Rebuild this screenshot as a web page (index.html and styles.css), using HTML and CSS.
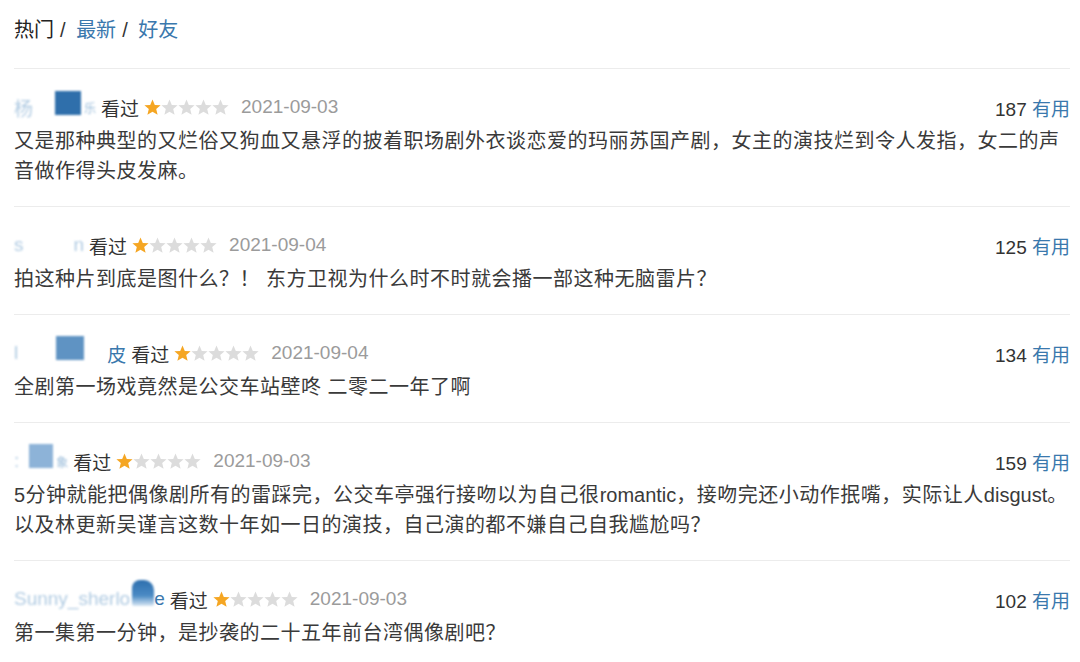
FILE: index.html
```html
<!DOCTYPE html>
<html lang="zh">
<head>
    <meta charset="UTF-8">
    <title>短评</title>
    <link rel="stylesheet" href="styles.css">
</head>
<body>
    <svg width="0" height="0" class="defs">
        <defs>
            <polygon id="star" points="8.5,0.5 10.8,5.9 16.6,6.3 12.2,10.1 13.6,15.8 8.5,12.7 3.4,15.8 4.8,10.1 0.4,6.3 6.2,5.9"/>
        </defs>
    </svg>

    <div class="tabs">
        <span class="tab">热门</span><span class="slash">/</span>
        <a class="tab link">最新</a><span class="slash">/</span>
        <a class="tab link">好友</a>
    </div>

    <div class="comment">
        <div class="meta">
            <div class="info">
                <span class="user"><span class="faint">杨</span><span class="mosaic m1"></span><span class="faint tail">乐</span></span>
                <span class="watched">看过</span>
                <svg class="stars" width="86" height="17" viewBox="0 0 86 17">
                    <use href="#star" x="0" class="on"/><use href="#star" x="17" class="off"/><use href="#star" x="34" class="off"/><use href="#star" x="51" class="off"/><use href="#star" x="68" class="off"/>
                </svg>
                <span class="date">2021-09-03</span>
            </div>
            <div class="votes"><span class="count">187</span> <a class="useful">有用</a></div>
        </div>
        <p class="text">又是那种典型的又烂俗又狗血又悬浮的披着职场剧外衣谈恋爱的玛丽苏国产剧，女主的演技烂到令人发指，女二的声音做作得头皮发麻。</p>
    </div>

    <div class="comment">
        <div class="meta">
            <div class="info">
                <span class="user"><span class="faint">s</span><span class="gap g2"></span><span class="faint">n</span></span>
                <span class="watched">看过</span>
                <svg class="stars" width="86" height="17" viewBox="0 0 86 17">
                    <use href="#star" x="0" class="on"/><use href="#star" x="17" class="off"/><use href="#star" x="34" class="off"/><use href="#star" x="51" class="off"/><use href="#star" x="68" class="off"/>
                </svg>
                <span class="date">2021-09-04</span>
            </div>
            <div class="votes"><span class="count">125</span> <a class="useful">有用</a></div>
        </div>
        <p class="text">拍这种片到底是图什么？！ 东方卫视为什么时不时就会播一部这种无脑雷片？</p>
    </div>

    <div class="comment">
        <div class="meta">
            <div class="info">
                <span class="user"><span class="faint">l</span><span class="gap g3"></span><span class="mosaic m3"></span><span class="gap g3b"></span><span class="plain">皮</span></span>
                <span class="watched">看过</span>
                <svg class="stars" width="86" height="17" viewBox="0 0 86 17">
                    <use href="#star" x="0" class="on"/><use href="#star" x="17" class="off"/><use href="#star" x="34" class="off"/><use href="#star" x="51" class="off"/><use href="#star" x="68" class="off"/>
                </svg>
                <span class="date">2021-09-04</span>
            </div>
            <div class="votes"><span class="count">134</span> <a class="useful">有用</a></div>
        </div>
        <p class="text">全剧第一场戏竟然是公交车站壁咚 二零二一年了啊</p>
    </div>

    <div class="comment">
        <div class="meta">
            <div class="info">
                <span class="user"><span class="faint">:</span><span class="mosaic m4"></span><span class="faint tail">象</span></span>
                <span class="watched">看过</span>
                <svg class="stars" width="86" height="17" viewBox="0 0 86 17">
                    <use href="#star" x="0" class="on"/><use href="#star" x="17" class="off"/><use href="#star" x="34" class="off"/><use href="#star" x="51" class="off"/><use href="#star" x="68" class="off"/>
                </svg>
                <span class="date">2021-09-03</span>
            </div>
            <div class="votes"><span class="count">159</span> <a class="useful">有用</a></div>
        </div>
        <p class="text">5分钟就能把偶像剧所有的雷踩完，公交车亭强行接吻以为自己很<span class="en">romantic</span>，接吻完还小动作抿嘴，实际让人<span class="en">disgust</span>。以及林更新吴谨言这数十年如一日的演技，自己演的都不嫌自己自我尴尬吗？</p>
    </div>

    <div class="comment">
        <div class="meta">
            <div class="info">
                <span class="user"><span class="faint">Sunny_sherlo</span><span class="mosaic m5"></span><span class="plain">e</span></span>
                <span class="watched">看过</span>
                <svg class="stars" width="86" height="17" viewBox="0 0 86 17">
                    <use href="#star" x="0" class="on"/><use href="#star" x="17" class="off"/><use href="#star" x="34" class="off"/><use href="#star" x="51" class="off"/><use href="#star" x="68" class="off"/>
                </svg>
                <span class="date">2021-09-03</span>
            </div>
            <div class="votes"><span class="count">102</span> <a class="useful">有用</a></div>
        </div>
        <p class="text">第一集第一分钟，是抄袭的二十五年前台湾偶像剧吧？</p>
    </div>
</body>
</html>
```

FILE: styles.css
```css
/* Page */
body {
    margin: 0;
    padding: 15px 10px 0 14px;
    background: #fff;
    color: #3a3a3a;
    font-family: "Liberation Sans", "Noto Sans CJK SC", sans-serif;
    font-size: 19px;
    overflow: hidden;
}

.defs {
    position: absolute;
}

/* Tabs */
.tabs {
    line-height: 30px;
    padding-bottom: 23px;
    border-bottom: 1px solid #ececec;
    font-size: 20px;
}

.tab {
    color: #222;
}

.tab.link {
    color: #3a78ad;
}

.slash {
    color: #333;
    margin: 0 5px 0 6px;
}

/* Comment rows */
.comment {
    padding: 23px 0 20px;
    border-bottom: 1px solid #ececec;
}

.comment:last-child {
    border-bottom: none;
}

.meta {
    display: flex;
    justify-content: space-between;
    align-items: center;
    height: 30px;
    margin-bottom: 4px;
}

.info {
    display: flex;
    align-items: center;
}

.user {
    display: flex;
    align-items: center;
    color: #3a78ad;
    margin-right: 5px;
}

.faint {
    color: #8fb5d6;
    filter: blur(1.3px);
    opacity: 0.7;
}

/* partly hidden last character of a blurred name */
.faint.tail {
    font-size: 12px;
    opacity: 0.9;
    margin-left: 3px;
}

.plain {
    color: #3a78ad;
}

.gap {
    display: inline-block;
}

.g2 { width: 50px; }
.g3 { width: 38px; }
.g3b { width: 23px; }

.mosaic {
    display: inline-block;
    height: 24px;
    filter: blur(0.8px);
}

.m1 {
    width: 26px;
    margin-left: 22px;
    background: #2f6fab;
    transform: translateY(-4px);
}

.m3 {
    width: 28px;
    background: #5f93c3;
    transform: translateY(-5px);
}

.m4 {
    width: 24px;
    margin-left: 10px;
    background: #8db3d8;
    transform: translateY(-5px);
}

.m5 {
    width: 22px;
    height: 26px;
    margin-left: 2px;
    background: linear-gradient(to bottom, #2d6fae 0%, #4b8ac4 60%, #d8e7f4 100%);
    border-radius: 8px 10px 2px 2px;
    transform: translateY(-6px);
}

.watched {
    color: #333;
    margin-right: 5px;
}

.stars {
    display: block;
    margin-right: 11px;
}

.stars .on {
    fill: #f5a623;
}

.stars .off {
    fill: #dcdcdc;
}

.date {
    color: #9b9b9b;
}

.votes {
    color: #333;
}

.useful {
    color: #3a78ad;
}

.text {
    margin: 0;
    font-size: 20px;
    letter-spacing: 0.5px;
    line-height: 30px;
    color: #3a3a3a;
}

.text .en {
    letter-spacing: 0;
}
```
